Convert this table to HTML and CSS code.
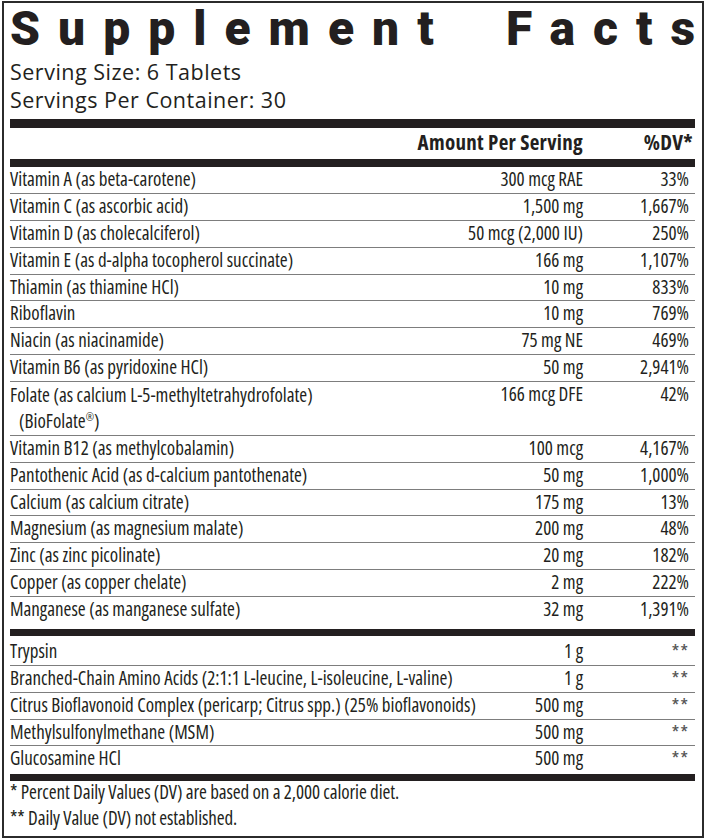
FILE: index.html
```html
<!DOCTYPE html>
<html lang="en">
<head>
<meta charset="utf-8">
<title>Supplement Facts</title>
<link rel="stylesheet" href="styles.css">
</head>
<body>
<div class="panel">
  <h1 class="title"><span class="word">Supplemen<span class="end">t</span></span><span class="word">Fact<span class="end">s</span></span></h1>
  <p class="serving">Serving Size: 6 Tablets</p>
  <p class="serving">Servings Per Container: 30</p>
  <div class="bar bar-top"></div>
  <div class="row head"><span class="name"></span><span class="amt">Amount Per Serving</span><span class="dv">%DV*</span></div>
  <div class="bar bar-head"></div>
  <div class="group group-vitamins">
    <div class="row"><span class="name">Vitamin A (as beta-carotene)</span><span class="amt">300 mcg RAE</span><span class="dv">33%</span></div>
    <div class="row"><span class="name">Vitamin C (as ascorbic acid)</span><span class="amt">1,500 mg</span><span class="dv">1,667%</span></div>
    <div class="row"><span class="name">Vitamin D (as cholecalciferol)</span><span class="amt">50 mcg (2,000 IU)</span><span class="dv">250%</span></div>
    <div class="row"><span class="name">Vitamin E (as d-alpha tocopherol succinate)</span><span class="amt">166 mg</span><span class="dv">1,107%</span></div>
    <div class="row"><span class="name">Thiamin (as thiamine HCl)</span><span class="amt">10 mg</span><span class="dv">833%</span></div>
    <div class="row"><span class="name">Riboflavin</span><span class="amt">10 mg</span><span class="dv">769%</span></div>
    <div class="row"><span class="name">Niacin (as niacinamide)</span><span class="amt">75 mg NE</span><span class="dv">469%</span></div>
    <div class="row"><span class="name">Vitamin B6 (as pyridoxine HCl)</span><span class="amt">50 mg</span><span class="dv">2,941%</span></div>
    <div class="row tall"><span class="name">Folate (as calcium L-5-methyltetrahydrofolate)<br><span class="indent">(BioFolate<sup>®</sup>)</span></span><span class="amt">166 mcg DFE</span><span class="dv">42%</span></div>
    <div class="row"><span class="name">Vitamin B12 (as methylcobalamin)</span><span class="amt">100 mcg</span><span class="dv">4,167%</span></div>
    <div class="row"><span class="name">Pantothenic Acid (as d-calcium pantothenate)</span><span class="amt">50 mg</span><span class="dv">1,000%</span></div>
    <div class="row"><span class="name">Calcium (as calcium citrate)</span><span class="amt">175 mg</span><span class="dv">13%</span></div>
    <div class="row"><span class="name">Magnesium (as magnesium malate)</span><span class="amt">200 mg</span><span class="dv">48%</span></div>
    <div class="row"><span class="name">Zinc (as zinc picolinate)</span><span class="amt">20 mg</span><span class="dv">182%</span></div>
    <div class="row"><span class="name">Copper (as copper chelate)</span><span class="amt">2 mg</span><span class="dv">222%</span></div>
    <div class="row"><span class="name">Manganese (as manganese sulfate)</span><span class="amt">32 mg</span><span class="dv">1,391%</span></div>
  </div>
  <div class="bar bar-mid"></div>
  <div class="group group-other">
    <div class="row"><span class="name">Trypsin</span><span class="amt">1 g</span><span class="dv stars">**</span></div>
    <div class="row"><span class="name">Branched-Chain Amino Acids (2:1:1 L-leucine, L-isoleucine, L-valine)</span><span class="amt">1 g</span><span class="dv stars">**</span></div>
    <div class="row"><span class="name">Citrus Bioflavonoid Complex (pericarp; Citrus spp.) (25% bioflavonoids)</span><span class="amt">500 mg</span><span class="dv stars">**</span></div>
    <div class="row"><span class="name">Methylsulfonylmethane (MSM)</span><span class="amt">500 mg</span><span class="dv stars">**</span></div>
    <div class="row"><span class="name">Glucosamine HCl</span><span class="amt">500 mg</span><span class="dv stars">**</span></div>
  </div>
  <div class="bar bar-bottom"></div>
  <p class="note">* Percent Daily Values (DV) are based on a 2,000 calorie diet.</p>
  <p class="note">** Daily Value (DV) not established.</p>
</div>
</body>
</html>
```
FILE: styles.css
```css
* { box-sizing: border-box; }

html, body {
  margin: 0;
  padding: 0;
  background: #ffffff;
}

body {
  font-family: "Open Sans", "Liberation Sans", sans-serif;
  color: #231f20;
}

.panel {
  margin: 1px 2px 2px 2px;
  height: 837px;
  border: 2px solid #2b2b2b;
  padding: 0 7px 0 6px;
  display: flex;
  flex-direction: column;
}

.title {
  margin: 0;
  display: flex;
  justify-content: space-between;
  font-family: Roboto, "Open Sans", sans-serif;
  font-size: 48px;
  line-height: 52px;
  font-weight: 900;
  letter-spacing: 18px;
}

.title .end {
  letter-spacing: 0;
}

.serving {
  margin: 0;
  font-size: 21.5px;
  line-height: 28px;
  letter-spacing: 0.5px;
}

.title + .serving {
  margin-top: 3px;
}

.bar {
  background: #231f20;
  flex: none;
}

.bar-top { height: 9px; margin-top: 5px; }
.bar-head { height: 8px; }
.bar-mid { height: 7px; margin-top: 6px; }
.bar-bottom { height: 7px; margin-top: 1.5px; }

.row {
  display: grid;
  grid-template-columns: 1fr auto 112px;
  font-size: 19px;
  line-height: 25.875px;
  font-stretch: 75%;
  white-space: nowrap;
}

.group .row + .row {
  border-top: 1px solid #7d7d7d;
}

.group-other .row:first-child {
  padding-top: 3px;
}

.row .amt,
.row .dv {
  text-align: right;
}

.row .dv {
  padding-right: 6px;
}

.row.head {
  font-size: 21px;
  font-weight: 700;
  font-stretch: 87.5%;
  letter-spacing: 0.3px;
  line-height: 28px;
  height: 31px;
}

.row.head .dv {
  padding-right: 2px;
}

.row.tall .name {
  line-height: 26.375px;
}

.indent {
  padding-left: 9px;
}

sup {
  font-size: 10px;
  line-height: 0;
  vertical-align: 7px;
}

.stars {
  color: #555555;
  font-size: 20px;
  letter-spacing: 1px;
}

.note {
  margin: 0;
  font-size: 19px;
  line-height: 26px;
  font-stretch: 75%;
  letter-spacing: -0.1px;
}

.bar-bottom + .note {
  margin-top: -2px;
}
```
